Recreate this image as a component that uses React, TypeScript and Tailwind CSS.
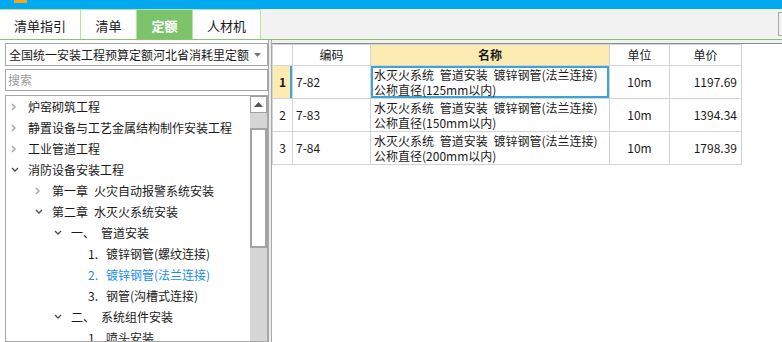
import { Fragment } from 'react'

interface TreeRow {
  level: number
  arrow?: 'right' | 'down'
  prefix?: string
  text: string
  active?: boolean
}

const treeRows: TreeRow[] = [
  { level: 0, arrow: 'right', text: '炉窑砌筑工程' },
  { level: 0, arrow: 'right', text: '静置设备与工艺金属结构制作安装工程' },
  { level: 0, arrow: 'right', text: '工业管道工程' },
  { level: 0, arrow: 'down', text: '消防设备安装工程' },
  { level: 1, arrow: 'right', prefix: '第一章', text: '火灾自动报警系统安装' },
  { level: 1, arrow: 'down', prefix: '第二章', text: '水灭火系统安装' },
  { level: 2, arrow: 'down', prefix: '一、', text: '管道安装' },
  { level: 3, prefix: '1.', text: '镀锌钢管(螺纹连接)' },
  { level: 3, prefix: '2.', text: '镀锌钢管(法兰连接)', active: true },
  { level: 3, prefix: '3.', text: '钢管(沟槽式连接)' },
  { level: 2, arrow: 'down', prefix: '二、', text: '系统组件安装' },
  { level: 3, prefix: '1.', text: '喷头安装' },
]

const quotaRows = [
  { no: 1, code: '7-82', size: '125', unit: '10m', price: '1197.69' },
  { no: 2, code: '7-83', size: '150', unit: '10m', price: '1394.34' },
  { no: 3, code: '7-84', size: '200', unit: '10m', price: '1798.39' },
]

const tabs = [
  { label: '清单指引', w: 'w-[81px]' },
  { label: '清单', w: 'w-[56px]' },
  { label: '定额', w: 'w-[56px]', active: true },
  { label: '人材机', w: 'w-[68px]' },
]

function Arrow({ dir }: { dir: 'right' | 'down' }) {
  if (dir === 'right') {
    return (
      <svg width="6" height="8" viewBox="0 0 6 8">
        <polyline points="1,1 4,4 1,7" fill="none" stroke="#a3a3a3" strokeWidth="1.4" />
      </svg>
    )
  }
  return (
    <svg width="8" height="6" viewBox="0 0 8 6">
      <polyline points="1,1 4,4 7,1" fill="none" stroke="#505050" strokeWidth="1.4" />
    </svg>
  )
}

const indent: Record<number, string> = {
  0: 'pl-[5px]',
  1: 'pl-[29px]',
  2: 'pl-[48px]',
  3: 'pl-[82px]',
}

function TreeItem({ row }: { row: TreeRow }) {
  return (
    <div
      className={`flex items-center h-[21px] whitespace-nowrap ${indent[row.level]} ${
        row.active ? 'text-[#1a8cf0]' : 'text-[#1a1a1a]'
      }`}
    >
      {row.arrow && (
        <span className="w-[17px] flex items-center">
          <Arrow dir={row.arrow} />
        </span>
      )}
      {row.level === 1 && (
        <>
          <span>{row.prefix}</span>
          <span className="ml-[6px]">{row.text}</span>
        </>
      )}
      {row.level === 2 && (
        <>
          <span className="w-[30px]">{row.prefix}</span>
          <span>{row.text}</span>
        </>
      )}
      {row.level === 3 && (
        <>
          <span className="w-[18px]">{row.prefix}</span>
          <span>{row.text}</span>
        </>
      )}
      {row.level === 0 && <span>{row.text}</span>}
    </div>
  )
}

export default function App() {
  return (
    <div className="w-[782px] h-[342px] overflow-hidden bg-white text-[12px] font-['Noto_Sans_CJK_SC',sans-serif] text-[#1a1a1a] flex flex-col">
      {/* title bar */}
      <div className="h-[9px] bg-[#00a9f0] shrink-0">
        <div className="ml-[14px] w-[13px] h-[3px] bg-[#f5a623]" />
      </div>

      {/* tabs */}
      <div className="h-[31px] shrink-0 flex bg-[#f2f2f2] border-b border-[#86c56f]">
        {tabs.map(t => (
          <div
            key={t.label}
            className={`${t.w} h-full flex items-center justify-center pt-[3px] text-[13px] border-r border-t border-[#b7e3a2] ${
              t.active ? 'bg-[#7dc36b] text-white font-bold' : 'bg-white'
            }`}
          >
            {t.label}
          </div>
        ))}
        <div className="ml-auto mt-[3px] w-[4px] h-[24px] border-l border-y border-[#a8a8a8]" />
      </div>

      <div className="flex flex-1 min-h-0">
        {/* left panel */}
        <div className="w-[268px] shrink-0 pl-[5px] pt-[3px] flex flex-col">
          <div className="h-[23px] border border-[#a6a6a6] bg-white flex items-center pl-[3px] pr-[6px]">
            <span className="flex-1 whitespace-nowrap overflow-hidden">全国统一安装工程预算定额河北省消耗里定额</span>
            <svg width="7" height="4" viewBox="0 0 7 4" className="ml-[2px]">
              <polygon points="0,0 7,0 3.5,4" fill="#777" />
            </svg>
          </div>
          <div className="mt-[3px] h-[22px] border border-[#a6a6a6] bg-white flex items-center pl-[2px] text-[#9a9a9a]">
            搜索
          </div>
          <div className="mt-[4px] flex-1 min-h-0 border border-[#a6a6a6] flex overflow-hidden">
            <div className="flex-1 min-w-0 overflow-hidden">
              {treeRows.map((r, i) => (
                <TreeItem key={i} row={r} />
              ))}
            </div>
            <div className="w-[17px] shrink-0 bg-[#d6d6d6] flex flex-col">
              <div className="h-[17px] bg-white border border-[#a0a0a0] flex items-center justify-center">
                <svg width="9" height="5" viewBox="0 0 9 5">
                  <polygon points="0,5 9,5 4.5,0" fill="#555" />
                </svg>
              </div>
              <div className="mt-[15px] h-[120px] bg-white border-2 border-[#a3a3a3]" />
            </div>
          </div>
        </div>

        {/* splitter */}
        <div className="w-[4px] shrink-0 border-x border-[#a8a8a8] bg-[#ececec]" />

        {/* right panel */}
        <div className="flex-1 min-w-0 flex flex-col">
          <div className="h-[3px] bg-[#f2f2f2]" />
          <div className="flex-1 border-t border-[#8f8f8f] bg-white">
            <table className="table-fixed border-collapse w-[469px]">
              <colgroup>
                <col className="w-[20px]" />
                <col className="w-[78px]" />
                <col className="w-[239px]" />
                <col className="w-[60px]" />
                <col className="w-[72px]" />
              </colgroup>
              <thead>
                <tr className="h-[21px]">
                  <th className="border border-[#d4d4d4] font-normal" />
                  <th className="border border-[#d4d4d4] font-normal text-center">编码</th>
                  <th className="border border-[#d4d4d4] bg-[#fdecb2] font-bold text-center">名称</th>
                  <th className="border border-[#d4d4d4] font-normal text-center">单位</th>
                  <th className="border border-[#d4d4d4] font-normal text-center">单价</th>
                </tr>
              </thead>
              <tbody>
                {quotaRows.map(r => {
                  const sel = r.no === 1
                  return (
                    <tr key={r.no} className="h-[33px]">
                      <td
                        className={`border border-[#d4d4d4] text-center ${
                          sel ? 'bg-[#fdecb2] font-bold shadow-[inset_-2px_0_0_#3aa5d6]' : ''
                        }`}
                      >
                        {r.no}
                      </td>
                      <td className="border border-[#d4d4d4] pl-[3px]">{r.code}</td>
                      <td
                        className={`border border-[#d4d4d4] align-top pl-[3px] pt-[1px] leading-[15px] whitespace-nowrap [word-spacing:3px] ${
                          sel ? 'shadow-[inset_0_0_0_2px_#3aa5d6]' : ''
                        }`}
                      >
                        <Fragment>
                          <div>水灭火系统 管道安装 镀锌钢管(法兰连接)</div>
                          <div>公称直径({r.size}mm以内)</div>
                        </Fragment>
                      </td>
                      <td className="border border-[#d4d4d4] text-center">{r.unit}</td>
                      <td className="border border-[#d4d4d4] text-right pr-[4px]">{r.price}</td>
                    </tr>
                  )
                })}
              </tbody>
            </table>
          </div>
        </div>
      </div>
    </div>
  )
}
